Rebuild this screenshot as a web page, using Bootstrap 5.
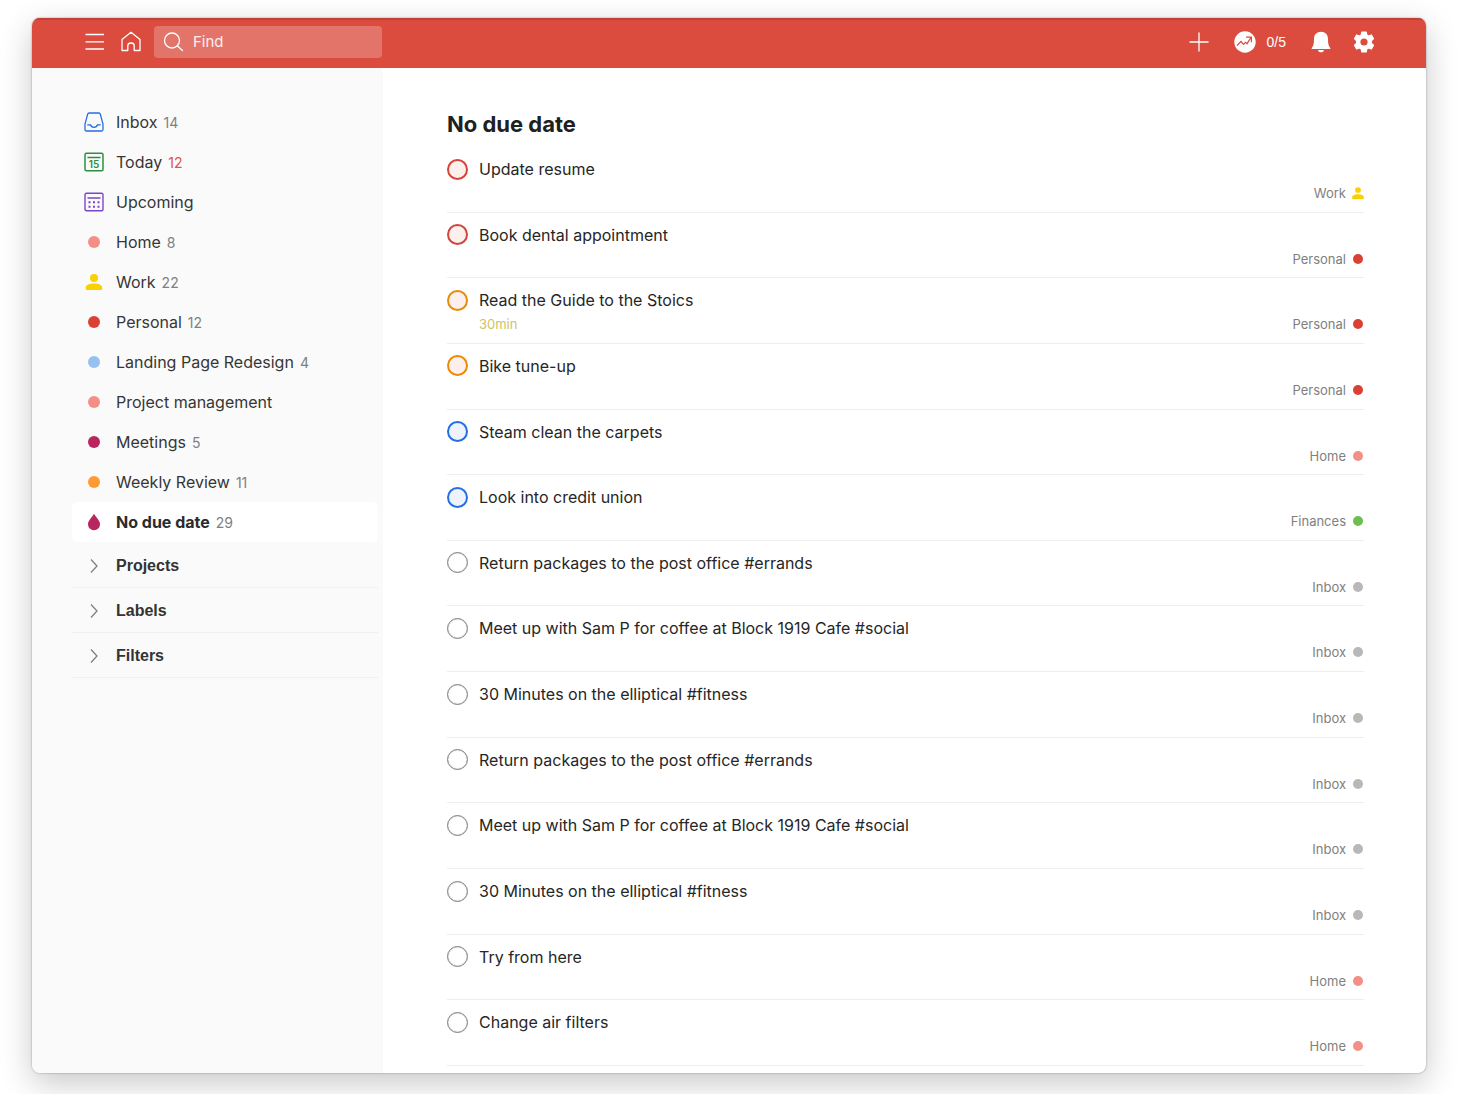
<!DOCTYPE html>
<html lang="en">
<head>
<meta charset="utf-8">
<meta name="viewport" content="width=device-width, initial-scale=1">
<title>No due date</title>
<link href="https://cdn.jsdelivr.net/npm/bootstrap@5.3.0/dist/css/bootstrap.min.css" rel="stylesheet">
<style>
  :root { --brand: #db4c3f; --ink: #262626; --muted-ink: #808080; }
  body { font-family: Inter, "Liberation Sans", sans-serif; color: var(--ink); background: #fff; }
  .stage { min-height: calc(100vh - 24px); padding: 18px 32px 21px; }
  .app-window { border-radius: 8px; box-shadow: 0 0 2px rgba(0,0,0,.4), 0 10px 32px rgba(0,0,0,.22); background: #fff; }
  .topbar { background: var(--brand); padding: 8px 51px 10px 53px; box-shadow: inset 0 2px 0 #c04236; }
  .icon-btn { background: none; border: 0; padding: 0; color: #fff; line-height: 0; display: block; }
  .tools-left { gap: 15px; }
  .search-box { width: 228px; height: 32px; background: #e37469; border-radius: 4px; padding: 1px 9px 0; }
  .tools-left .search-box { margin-left: -3px; }
  .search-box input { background: none; border: 0; outline: 0; color: #fff; font-size: 15px; padding: 0; min-width: 0; }
  .search-box input::placeholder { color: #fff; opacity: .9; }
  .goal { font-family: "Liberation Sans", sans-serif; font-size: 14px; line-height: 20px; margin-left: 10px; }
  .settings-btn { margin-left: 21px; }
  .sidebar { width: 351px; background: #fafafa; padding: 34px 5px 0 40px; }
  .view-links { margin-bottom: 1px; }
  .side-link { height: 40px; padding-left: 12px; border-radius: 5px; font-size: 16px; color: #363636; text-decoration: none; }
  .side-icon { width: 20px; height: 20px; margin-right: 12px; display: flex; align-items: center; justify-content: center; flex: none; }
  .count { font-size: 14px; font-weight: 400; color: var(--muted-ink); margin-left: 6px; }
  .count-due { color: #e05246; }
  .side-link.active { background: #fff; font-weight: 700; color: #2b2b2b; }
  .section-btn { height: 45px; padding: 2px 0 0 12px; background: none; border: 0; border-bottom: 1px solid #f0f0f0; font-family: "Liberation Sans", sans-serif; font-size: 16px; font-weight: 700; color: #333; }
  .tint { width: 12px; height: 12px; border-radius: 50%; background: currentColor; }
  .tint-sm { width: 10px; height: 10px; margin: 0 1px; border-radius: 50%; background: currentColor; }
  .c-home { color: #f48f87; } .c-personal { color: #db4035; } .c-blue { color: #96c0f0; }
  .c-berry { color: #b8255f; } .c-orange { color: #ff9933; } .c-green { color: #6cbf4f; } .c-grey { color: #b8b8b8; }
  .view { padding: 41px 62px 7px 64px; }
  .view h1 { font-size: 22px; line-height: 30px; font-weight: 700; margin-bottom: 8px; color: #202020; }
  .task { border-bottom: 1px solid #eee; padding-top: 10px; }
  .task-title { font-size: 16px; line-height: 24px; }
  .task-meta { font-size: 13px; line-height: 24px; }
  .proj { color: var(--muted-ink); gap: 6px; }
  .est { color: #cdc465; padding-left: 32px; }
  .tick { appearance: none; width: 21px; height: 21px; margin: 0 11px 0 0; border: 1px solid #808080; border-radius: 50%; flex: none; background: #fff; box-shadow: inset 0 0 1px #808080; }
  .p1 { border: 2px solid #d1453b; background: #fcefec; box-shadow: none; }
  .p2 { border: 2px solid #eb8909; background: #fdf0ec; box-shadow: none; }
  .p3 { border: 2px solid #246fe0; background: #eef2fa; box-shadow: none; }
</style>
</head>
<body>
<div class="stage d-flex overflow-hidden">
  <div class="app-window d-flex flex-column flex-grow-1 overflow-hidden">
    <header class="topbar d-flex align-items-center justify-content-between">
      <div class="tools-left d-flex align-items-center">
        <button class="icon-btn" type="button" aria-label="Menu"><svg width="20" height="20" viewBox="0 0 20 20" stroke="#fff" stroke-width="1.3"><path d="M.5 2.500h18.500M.5 9.800h18.500M.5 17h18.500"/></svg></button>
        <button class="icon-btn" type="button" aria-label="Home"><svg width="22" height="22" viewBox="0 0 22 22" fill="none" stroke="#fff" stroke-width="1.300" stroke-linejoin="round"><path d="M2 8.600 11 1.300l9 7.300v10.900h-5.800v-4.800q0-2.700-3.200-2.700t-3.200 2.700v4.800H2z"/></svg></button>
        <label class="search-box d-flex align-items-center" for="find">
          <svg class="flex-shrink-0 me-2" width="22" height="22" viewBox="0 0 22 22" fill="none" stroke="#fff" stroke-width="1.300" stroke-linecap="round"><circle cx="9" cy="8.500" r="7.500"/><path d="m14.500 14 5 4.500"/></svg>
          <input class="flex-grow-1" id="find" type="text" placeholder="Find" aria-label="Find">
        </label>
      </div>
      <div class="d-flex align-items-center">
        <button class="icon-btn" type="button" aria-label="Add task"><svg width="20" height="20" viewBox="0 0 20 20" stroke="#fff" stroke-width="1.300"><path d="M10 .5v19M.5 10h19"/></svg></button>
        <button class="icon-btn d-flex align-items-center ms-4" type="button"><svg width="24" height="24" viewBox="0 0 24 24"><circle cx="12" cy="12" r="10.700" fill="#fff"/><path d="m4 15.500 4-4.200 2.500 3 2-2 1.500 1.400 4-6.200M13 7.200h5.400v5" fill="none" stroke="#db4c3f" stroke-width="1.200"/></svg><span class="goal">0/5</span></button>
        <button class="icon-btn ms-4" type="button" aria-label="Notifications"><svg width="22" height="22" viewBox="0 0 22 22" fill="#fff"><path d="M11 .8c4.300 0 7 3 7 7.200 0 4.500.4 6.700 2.300 8.900v1.100H1.700v-1.100C3.600 14.700 4 12.500 4 8 4 3.800 6.700.8 11 .8zM7.900 19h6.200c-.5 1.400-1.600 2.300-3.100 2.300S8.400 20.400 7.900 19z"/></svg></button>
        <button class="icon-btn settings-btn" type="button" aria-label="Settings"><svg width="22" height="22" viewBox="0 0 22 22"><path fill="#fff" stroke="#fff" stroke-width="1.500" stroke-linejoin="round" d="M8.900 1.200h4.200l.6 2.900 1.800 1 2.800-1 2.100 3.700-2.200 1.900v2.600l2.200 1.900-2.100 3.700-2.800-1-1.800 1-.6 2.900H8.900l-.6-2.900-1.800-1-2.800 1-2.100-3.700 2.200-1.900V9.700L1.600 7.800l2.100-3.700 2.800 1 1.800-1z"/><circle cx="11" cy="11" r="3.600" fill="#db4c3f"/></svg></button>
      </div>
    </header>
    <div class="d-flex flex-grow-1">
      <nav class="sidebar flex-shrink-0" aria-label="Views">
        <div class="view-links d-flex flex-column">
          <a href="#" class="side-link d-flex align-items-center"><span class="side-icon"><svg width="20" height="20" viewBox="0 0 20 20" fill="none" stroke="#246fe0" stroke-width="1.300"><path d="M5.200 1h9.600q1.200 0 1.500 1.100L19 12v5.500q0 1.500-1.500 1.500h-15Q1 19 1 17.500V12L3.700 2.100Q4 1 5.200 1z"/><path d="M3.300 12.800h3.200c.5 1.600 1.900 2.600 3.500 2.600s3-1 3.500-2.600h3.200"/></svg></span>Inbox<span class="count">14</span></a>
          <a href="#" class="side-link d-flex align-items-center"><span class="side-icon"><svg width="20" height="20" viewBox="0 0 20 20" fill="none" stroke="#2a9040" stroke-width="1.500"><rect x="1" y="1.200" width="18" height="17.600" rx="1.500"/><path d="M3.500 5.500h13"/><text x="10" y="16" text-anchor="middle" font-family="Inter, sans-serif" font-size="10" font-weight="600" fill="#2a9040" stroke="none">15</text></svg></span>Today<span class="count count-due">12</span></a>
          <a href="#" class="side-link d-flex align-items-center"><span class="side-icon"><svg width="20" height="20" viewBox="0 0 20 20" fill="none" stroke="#7b45c8" stroke-width="1.400"><rect x="1" y="1.200" width="18" height="17.600" rx="1.500"/><path d="M3.500 6h13"/><path d="M4.500 10.300h2m2.500 0h2m2.500 0h2M4.500 14.800h2m2.500 0h2m2.500 0h2" stroke-width="2"/></svg></span>Upcoming</a>
          <a href="#" class="side-link d-flex align-items-center"><span class="side-icon"><i class="tint c-home"></i></span>Home<span class="count">8</span></a>
          <a href="#" class="side-link d-flex align-items-center"><span class="side-icon"><svg width="18" height="18" viewBox="0 0 18 18" fill="#fad000"><circle cx="9" cy="5" r="4"/><path d="M.8 16v-1.500c0-2.500 3.800-4 8.200-4s8.200 1.500 8.200 4V16q0 1-1 1H1.800q-1 0-1-1z"/></svg></span>Work<span class="count">22</span></a>
          <a href="#" class="side-link d-flex align-items-center"><span class="side-icon"><i class="tint c-personal"></i></span>Personal<span class="count">12</span></a>
          <a href="#" class="side-link d-flex align-items-center"><span class="side-icon"><i class="tint c-blue"></i></span>Landing Page Redesign<span class="count">4</span></a>
          <a href="#" class="side-link d-flex align-items-center"><span class="side-icon"><i class="tint c-home"></i></span>Project management</a>
          <a href="#" class="side-link d-flex align-items-center"><span class="side-icon"><i class="tint c-berry"></i></span>Meetings<span class="count">5</span></a>
          <a href="#" class="side-link d-flex align-items-center"><span class="side-icon"><i class="tint c-orange"></i></span>Weekly Review<span class="count">11</span></a>
          <a href="#" class="side-link active d-flex align-items-center" aria-current="page"><span class="side-icon"><svg width="14" height="18" viewBox="0 0 14 18" fill="#b8255f"><path d="M7 .8c1.700 3.400 6 6.700 6 10.500a6 6 0 0 1-12 0C1 7.500 5.300 4.200 7 .8z"/></svg></span>No due date<span class="count">29</span></a>
        </div>
        <button type="button" class="section-btn w-100 d-flex align-items-center"><span class="side-icon"><svg width="10" height="16" viewBox="0 0 10 16" fill="none" stroke="#808080" stroke-width="1.300"><path d="m2 1.500 6 6.500-6 6.500"/></svg></span>Projects</button>
        <button type="button" class="section-btn w-100 d-flex align-items-center"><span class="side-icon"><svg width="10" height="16" viewBox="0 0 10 16" fill="none" stroke="#808080" stroke-width="1.300"><path d="m2 1.500 6 6.500-6 6.500"/></svg></span>Labels</button>
        <button type="button" class="section-btn w-100 d-flex align-items-center"><span class="side-icon"><svg width="10" height="16" viewBox="0 0 10 16" fill="none" stroke="#808080" stroke-width="1.300"><path d="m2 1.500 6 6.500-6 6.500"/></svg></span>Filters</button>
      </nav>
      <main class="view d-flex flex-column flex-grow-1">
        <h1>No due date</h1>
        <ul class="list-unstyled d-flex flex-column flex-grow-1 mb-0" id="tasks"></ul>
      </main>
    </div>
  </div>
</div>
<script src="https://cdn.jsdelivr.net/npm/bootstrap@5.3.0/dist/js/bootstrap.bundle.min.js"></script>
<script>
  const tasks = [
    ["Update resume", "p1", "Work", "work"],
    ["Book dental appointment", "p1", "Personal", "personal"],
    ["Read the Guide to the Stoics", "p2", "Personal", "personal", "30min"],
    ["Bike tune-up", "p2", "Personal", "personal"],
    ["Steam clean the carpets", "p3", "Home", "home"],
    ["Look into credit union", "p3", "Finances", "green"],
    ["Return packages to the post office #errands", "p4", "Inbox", "grey"],
    ["Meet up with Sam P for coffee at Block 1919 Cafe #social", "p4", "Inbox", "grey"],
    ["30 Minutes on the elliptical #fitness", "p4", "Inbox", "grey"],
    ["Return packages to the post office #errands", "p4", "Inbox", "grey"],
    ["Meet up with Sam P for coffee at Block 1919 Cafe #social", "p4", "Inbox", "grey"],
    ["30 Minutes on the elliptical #fitness", "p4", "Inbox", "grey"],
    ["Try from here", "p4", "Home", "home"],
    ["Change air filters", "p4", "Home", "home"]
  ];
  const person = '<svg width="12" height="12" viewBox="0 0 18 18" fill="#fad000"><circle cx="9" cy="4.500" r="4.300"/><path d="M.3 18v-2.500c0-2.800 3.800-4.500 8.700-4.500s8.700 1.700 8.700 4.500V18z"/></svg>';
  document.getElementById("tasks").innerHTML = tasks.map(([title, priority, project, color, estimate], i) => `
    <li class="task flex-fill">
      <div class="d-flex align-items-center">
        <input type="checkbox" class="tick ${priority}" id="task${i}">
        <label class="task-title" for="task${i}">${title}</label>
      </div>
      <div class="task-meta d-flex justify-content-between">
        <span class="est">${estimate || ""}</span>
        <span class="proj d-flex align-items-center">${project}${color === "work" ? person : `<i class="tint-sm c-${color}"></i>`}</span>
      </div>
    </li>`).join("");
</script>
</body>
</html>
